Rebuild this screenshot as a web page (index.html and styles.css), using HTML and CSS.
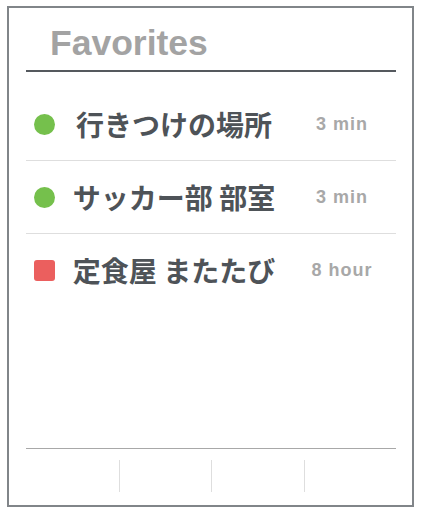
FILE: index.html
```html
<!DOCTYPE html>
<html lang="ja">
<head>
<meta charset="utf-8">
<link rel="stylesheet" href="styles.css">
</head>
<body>
<div class="card">
  <header class="header">
    <h1 class="title">Favorites</h1>
  </header>
  <ul class="list">
    <li class="row">
      <span class="mark dot"></span>
      <span class="name">行きつけの場所</span>
      <span class="time">3 min</span>
    </li>
    <li class="row">
      <span class="mark dot"></span>
      <span class="name">サッカー部 部室</span>
      <span class="time">3 min</span>
    </li>
    <li class="row">
      <span class="mark square"></span>
      <span class="name">定食屋 またたび</span>
      <span class="time">8 hour</span>
    </li>
  </ul>
  <nav class="tabs">
    <div class="tab"></div>
    <div class="tab"></div>
    <div class="tab"></div>
    <div class="tab"></div>
  </nav>
</div>
</body>
</html>
```
FILE: styles.css
```css
html, body {
  margin: 0;
  padding: 0;
  background: #ffffff;
}
body {
  font-family: "Liberation Sans", Arial, "Noto Sans CJK JP", sans-serif;
}
.card {
  box-sizing: border-box;
  width: 407px;
  height: 501px;
  margin: 6px 9px 7px 7px;
  border: 2px solid #818589;
  padding: 0 16px 0 17px;
  display: flex;
  flex-direction: column;
}
.header {
  padding-top: 15px;
  padding-bottom: 7px;
  border-bottom: 2px solid #55595e;
}
.title {
  margin: 0;
  padding-left: 24px;
  font-size: 35.5px;
  line-height: 40px;
  font-weight: bold;
  color: #a3a3a3;
}
.list {
  list-style: none;
  margin: 16px 0 0;
  padding: 0;
  flex: 1;
}
.row {
  display: grid;
  grid-template-columns: 34px 228px 1fr;
  align-items: center;
  height: 72px;
  border-bottom: 1px solid #dedede;
}
.row:last-child {
  border-bottom: none;
}
.mark {
  display: block;
  width: 21px;
  height: 21px;
  margin-left: 8px;
}
.dot {
  border-radius: 50%;
  background: #75c04c;
}
.square {
  border-radius: 3px;
  background: #eb5f5e;
}
.name {
  text-align: center;
  font-family: "Noto Sans CJK JP", sans-serif;
  font-weight: bold;
  font-size: 28px;
  line-height: 36px;
  color: #4e5358;
}
.time {
  text-align: center;
  font-family: "Liberation Sans", Arial, sans-serif;
  font-weight: bold;
  font-size: 18px;
  letter-spacing: 1px;
  color: #a8a8a8;
}
.tabs {
  display: grid;
  grid-template-columns: repeat(4, 1fr);
  border-top: 1px solid #a8a8a8;
  padding: 11px 0 13px;
}
.tab {
  height: 32px;
  border-left: 1px solid #dedede;
}
.tab:first-child {
  border-left: none;
}
```
